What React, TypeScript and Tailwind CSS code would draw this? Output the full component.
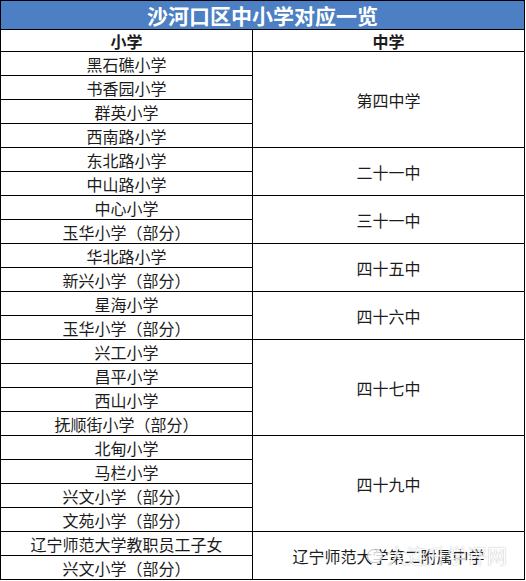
const groups = [
  { middle: "第四中学", schools: ["黑石礁小学", "书香园小学", "群英小学", "西南路小学"] },
  { middle: "二十一中", schools: ["东北路小学", "中山路小学"] },
  { middle: "三十一中", schools: ["中心小学", "玉华小学（部分）"] },
  { middle: "四十五中", schools: ["华北路小学", "新兴小学（部分）"] },
  { middle: "四十六中", schools: ["星海小学", "玉华小学（部分）"] },
  { middle: "四十七中", schools: ["兴工小学", "昌平小学", "西山小学", "抚顺街小学（部分）"] },
  { middle: "四十九中", schools: ["北甸小学", "马栏小学", "兴文小学（部分）", "文苑小学（部分）"] },
  { middle: "辽宁师范大学第二附属中学", schools: ["辽宁师范大学教职员工子女", "兴文小学（部分）"] },
];

const font = "font-['Microsoft_YaHei','Noto_Sans_CJK_SC',sans-serif]";

export default function App() {
  return (
    <div className={`w-[526px] h-[581px] bg-white ${font} text-[#1c1c1c]`}>
      <div className="w-[525px] border-l border-t border-black">
        <div className="h-[29px] border-b border-r border-black bg-[#4c7fc3] flex items-center justify-center">
          <span className="text-white text-[21px] font-bold leading-none">沙河口区中小学对应一览</span>
        </div>

        <div className="flex h-[22px] border-b border-black text-[16px] font-bold leading-none">
          <div className="w-[252px] border-r border-black flex items-center justify-center">小学</div>
          <div className="flex-1 border-r border-black flex items-center justify-center">中学</div>
        </div>

        {groups.map((g, gi) => (
          <div key={gi} className="flex border-b border-black text-[16px] leading-none">
            <div className="w-[252px] border-r border-black">
              {g.schools.map((s, i) => (
                <div
                  key={i}
                  className={
                    i < g.schools.length - 1
                      ? "h-[24px] border-b border-black flex items-center justify-center"
                      : "h-[23px] flex items-center justify-center"
                  }
                >
                  {s}
                </div>
              ))}
            </div>
            <div className="relative flex-1 border-r border-black flex items-center justify-center">
              {g.middle}
              {/* faint watermark over the last cell, as in the screenshot */}
              {gi === groups.length - 1 && (
                <div className="absolute left-[114px] top-1/2 -translate-y-1/2 flex items-center gap-[4px] opacity-80">
                  <span className="w-[16px] h-[14px] rounded-full border border-[#b5b5b5] bg-white" />
                  <span className="text-white text-[20px] leading-none [text-shadow:0_0_1px_#8a8a8a]">大连升学评网</span>
                </div>
              )}
            </div>
          </div>
        ))}
      </div>
    </div>
  );
}
